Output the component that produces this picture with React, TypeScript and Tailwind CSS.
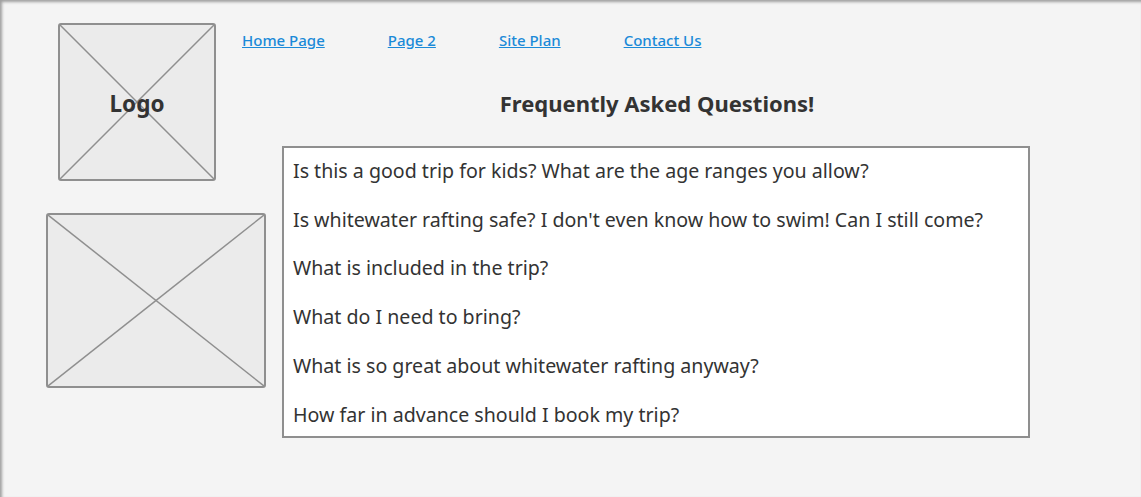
import React from "react";

const faqs = [
  "Is this a good trip for kids? What are the age ranges you allow?",
  "Is whitewater rafting safe? I don't even know how to swim! Can I still come?",
  "What is included in the trip?",
  "What do I need to bring?",
  "What is so great about whitewater rafting anyway?",
  "How far in advance should I book my trip?",
];

const links = ["Home Page", "Page 2", "Site Plan", "Contact Us"];

const Placeholder = ({
  className,
  children,
}: {
  className: string;
  children?: React.ReactNode;
}) => (
  <div
    className={`relative rounded-[3px] border-2 border-[#8f8f8f] bg-[#ebebeb] ${className}`}
  >
    <svg
      className="absolute inset-0 h-full w-full"
      preserveAspectRatio="none"
      viewBox="0 0 100 100"
    >
      <line x1="0" y1="0" x2="100" y2="100" stroke="#8f8f8f" strokeWidth="1.5" vectorEffect="non-scaling-stroke" />
      <line x1="100" y1="0" x2="0" y2="100" stroke="#8f8f8f" strokeWidth="1.5" vectorEffect="non-scaling-stroke" />
    </svg>
    {children}
  </div>
);

const App = () => {
  return (
    <div
      className="flex h-[497px] w-full bg-[#f4f4f4] pl-[46px] text-[#333] shadow-[inset_2px_2px_3px_rgba(0,0,0,0.35)]"
      style={{ fontFamily: "'Noto Sans', Lato, sans-serif" }}
    >
      <div className="flex w-[196px] shrink-0 flex-col">
        <Placeholder className="ml-[12px] mt-[23px] flex h-[158px] w-[158px] items-center justify-center pt-[3px]">
          <span className="relative text-[22.5px] font-bold">Logo</span>
        </Placeholder>
        <Placeholder className="mt-[32px] h-[175px] w-[220px] shrink-0" />
      </div>
      <div className="flex flex-col">
        <nav className="mt-[30px] flex h-[20px] gap-[63px] text-[15px] font-medium leading-5">
          {links.map((l) => (
            <a key={l} href="#" className="text-[#1b8ad8] underline">
              {l}
            </a>
          ))}
        </nav>
        <div className="ml-[41px] mt-[41px] h-[24px] w-[748px] text-center text-[22px] font-bold leading-6">
          Frequently Asked Questions!
        </div>
        <div className="ml-[40px] mt-[31px] h-[292px] w-[748px] border-2 border-[#8f8f8f] bg-white pl-[9px] text-[19.6px]">
          {faqs.map((q) => (
            <div key={q} className="flex h-[48.8px] items-center pb-[4px]">
              {q}
            </div>
          ))}
        </div>
      </div>
    </div>
  );
};

export default App;
